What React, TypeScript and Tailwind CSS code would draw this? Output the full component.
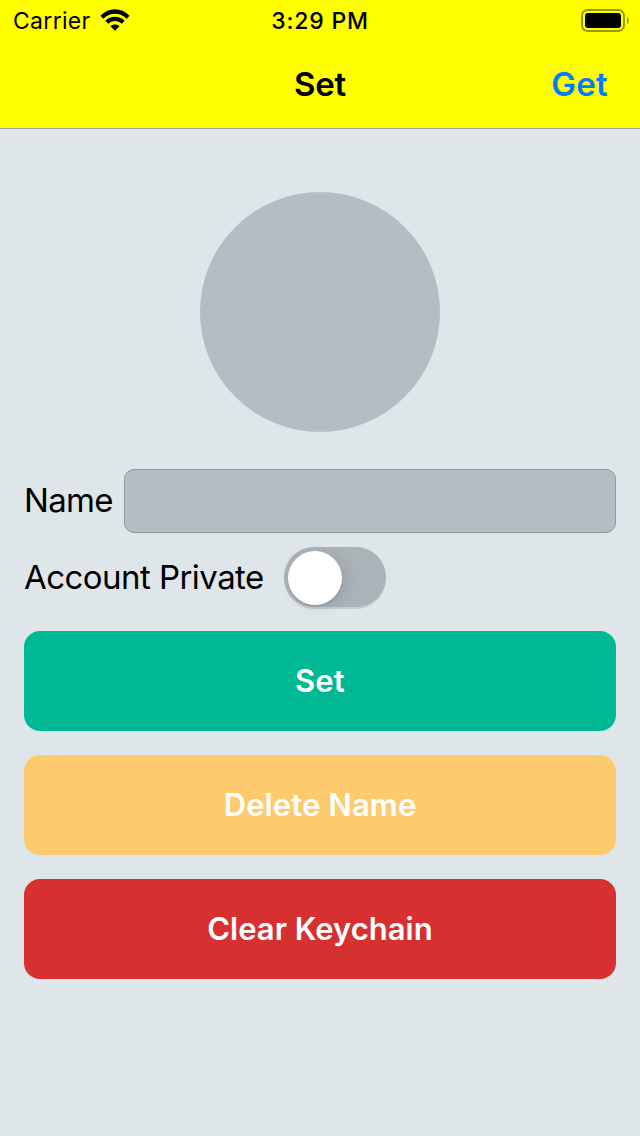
import React from 'react';

function StatusBar() {
  return (
    <div className="grid h-10 grid-cols-3 items-center text-[23px] leading-[42px]">
      <div className="flex items-center gap-[9px] pl-[13px]">
        <span className="tracking-[0.3px]">Carrier</span>
        <svg className="mb-0.5" width="30" height="22" viewBox="0 0 30 22">
          <path d="M0.4 6.8C8.600-1.800 21.400-1.800 29.600 6.800L26.700 9.700C20.200 3.100 9.800 3.100 3.300 9.700Z" />
          <path d="M5.300 11.700C10.700 6.300 19.300 6.300 24.700 11.700L21.700 14.700C18 11 12 11 8.300 14.700Z" />
          <path d="M15 21.800 10.500 17.200C13 15 17 15 19.500 17.200Z" />
        </svg>
      </div>
      <span className="text-center font-medium tracking-[0.8px]">3:29 PM</span>
      <div className="flex justify-end pb-px pr-[11px]">
        <svg width="48" height="24" viewBox="0 0 48 24">
          <rect x="1" y="1" width="42" height="21" rx="5.5" fill="none" stroke="black" strokeOpacity=".4" strokeWidth="2" />
          <rect x="4" y="4" width="36" height="15" rx="3" fill="black" />
          <path d="M46 8q2 1 2 3.500t-2 3.500z" fill="black" fillOpacity=".4" />
        </svg>
      </div>
    </div>
  );
}

export default function App() {
  return (
    <div className="flex h-[1136px] w-[640px] flex-col bg-[#dfe6e9] font-[Inter,sans-serif] text-black">
      <header className="h-[129px] border-b border-[#a0a0a0] bg-[#ffff00]">
        <StatusBar />
        <div className="grid h-[88px] grid-cols-3 items-center pt-0.5 text-[33px] font-semibold">
          <span />
          <h1 className="text-center tracking-[-0.2px]">Set</h1>
          <button className="pr-8 text-right tracking-[0.3px] text-[#007aff]">Get</button>
        </div>
      </header>
      <main className="flex flex-col px-6 pt-[63px]">
        <div className="size-60 self-center rounded-full bg-[#b2bec3]" />
        <label className="mt-[37px] flex h-16 items-center justify-between text-[33px]">
          <span className="tracking-[-0.7px]">Name</span>
          <input className="h-16 w-[492px] rounded-[10px] border border-[#8f999d] bg-[#b2bec3]" />
        </label>
        <div className="mt-[13px] flex h-[62px] items-center text-[33px]">
          <span className="w-[260px] pt-0.5 tracking-[-0.55px]">Account Private</span>
          <button role="switch" aria-checked="false" className="flex h-[60px] w-[102px] items-start rounded-full bg-[#abb3b8] p-1 shadow-[0_2px_0_#c5cccf]">
            <span className="size-[54px] rounded-full bg-white shadow-[0_2px_2px_rgba(0,0,0,0.08),4px_2px_14px_rgba(0,0,0,0.1)]" />
          </button>
        </div>
        <div className="mt-[23px] flex flex-col gap-6 text-[31px] font-semibold text-white">
          <button className="h-[100px] rounded-2xl bg-[#00b894] tracking-[0.2px]">Set</button>
          <button className="h-[100px] rounded-2xl bg-[#fdcb6e] tracking-[0.1px]">Delete Name</button>
          <button className="h-[100px] rounded-2xl bg-[#d63031]">Clear Keychain</button>
        </div>
      </main>
    </div>
  );
}
